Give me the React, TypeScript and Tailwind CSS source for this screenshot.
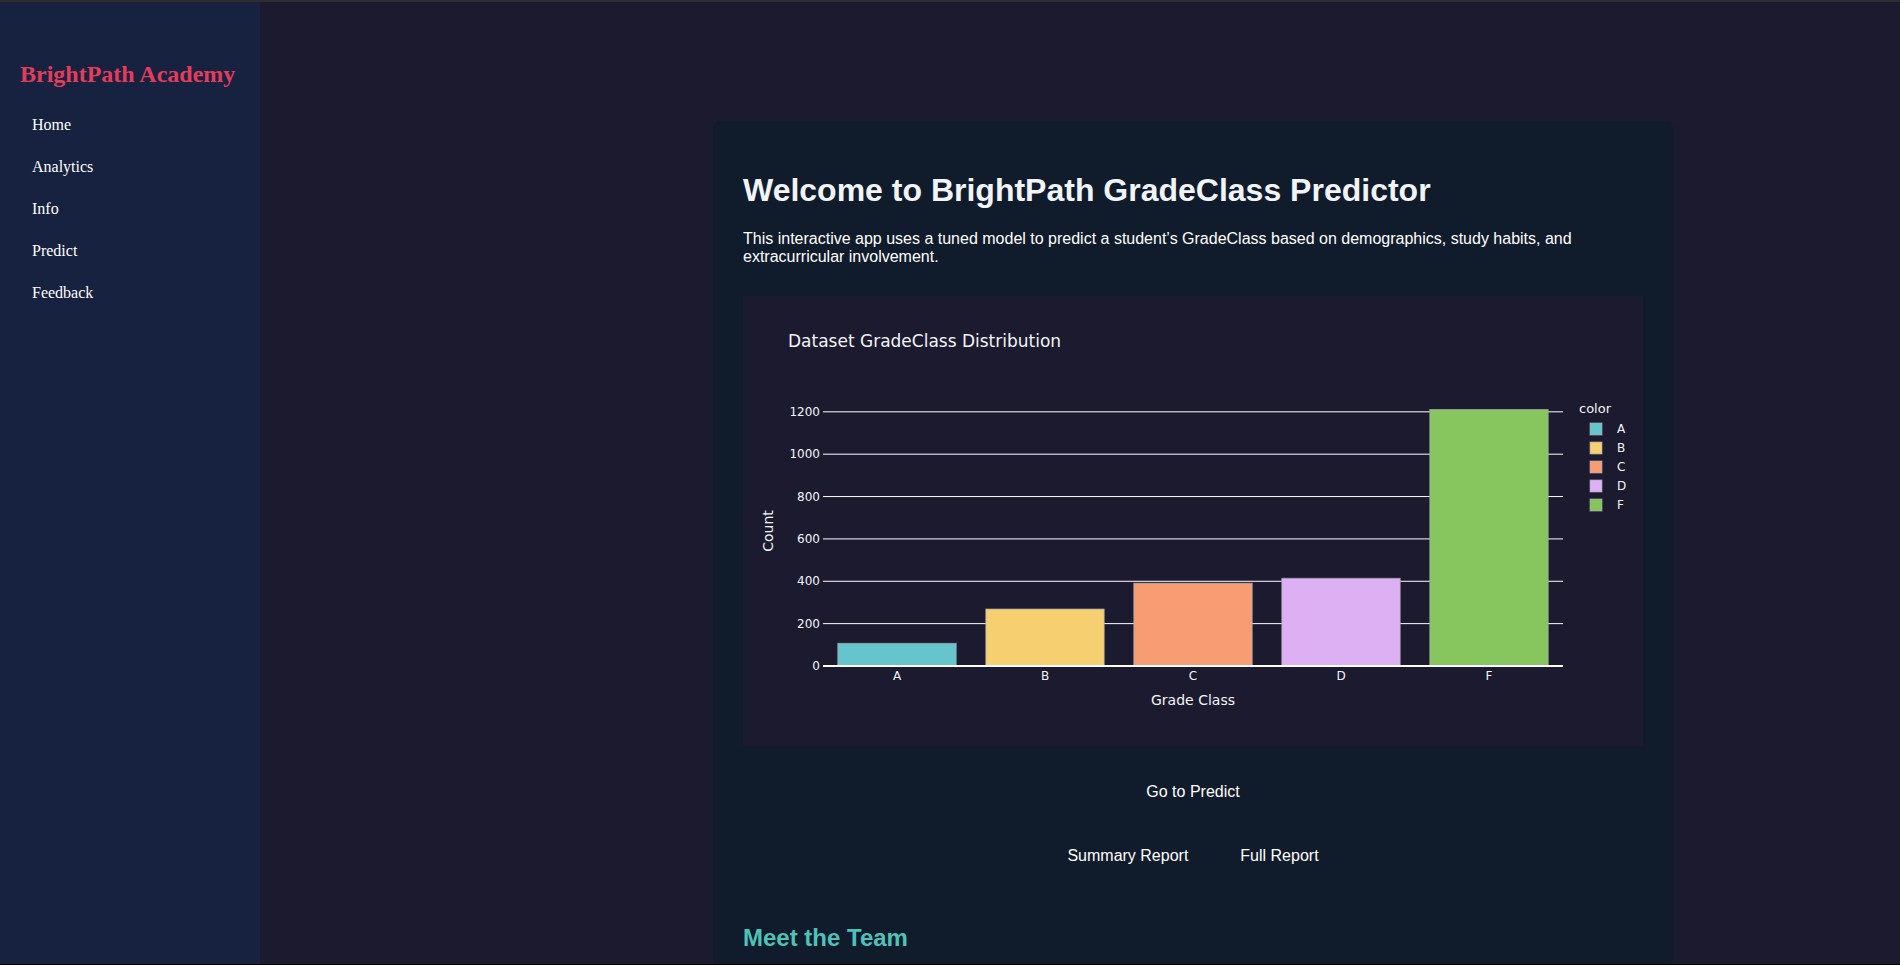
const grades = [
  { label: 'A', count: 107, color: '#66c5cc' },
  { label: 'B', count: 269, color: '#f6cf71' },
  { label: 'C', count: 391, color: '#f89c74' },
  { label: 'D', count: 414, color: '#dcb0f2' },
  { label: 'F', count: 1211, color: '#87c55f' },
]

const navItems = ['Home', 'Analytics', 'Info', 'Predict', 'Feedback']

const chartFont = "'DejaVu Sans', Verdana, sans-serif"

// plot area inside the 900x450 figure
const plotLeft = 80
const plotRight = 820
const plotTop = 100
const plotBottom = 370
const yMax = 1274.7
const yScale = (v: number) => plotBottom - (v / yMax) * (plotBottom - plotTop)

function GradeChart() {
  const slot = (plotRight - plotLeft) / grades.length
  const barWidth = slot * 0.8
  const ticks = [0, 200, 400, 600, 800, 1000, 1200]
  return (
    <svg width="900" height="450" viewBox="0 0 900 450" className="block">
      <text x="45" y="51" fill="#f2f5fa" fontSize="17" fontFamily={chartFont}>
        Dataset GradeClass Distribution
      </text>
      {ticks.map((t) => (
        <g key={t}>
          {t > 0 && (
            <line x1={plotLeft} x2={plotRight} y1={yScale(t)} y2={yScale(t)} stroke="#ffffff" strokeWidth="1" />
          )}
          <text x={plotLeft - 3} y={yScale(t) + 4} textAnchor="end" fill="#f2f5fa" fontSize="12" fontFamily={chartFont}>
            {t}
          </text>
        </g>
      ))}
      {grades.map((g, i) => {
        const x = plotLeft + slot * i + (slot - barWidth) / 2
        const y = yScale(g.count)
        return (
          <g key={g.label}>
            <rect
              x={x}
              y={y}
              width={barWidth}
              height={plotBottom - y}
              fill={g.color}
              stroke="rgba(170,170,180,0.7)"
              strokeWidth="1"
            />
            <text
              x={plotLeft + slot * i + slot / 2}
              y="384"
              textAnchor="middle"
              fill="#f2f5fa"
              fontSize="12"
              fontFamily={chartFont}
            >
              {g.label}
            </text>
          </g>
        )
      })}
      <line x1={plotLeft} x2={plotRight} y1={plotBottom} y2={plotBottom} stroke="#ffffff" strokeWidth="2" />
      <text x="450" y="409" textAnchor="middle" fill="#f2f5fa" fontSize="14" fontFamily={chartFont}>
        Grade Class
      </text>
      <text
        x="0"
        y="0"
        transform="translate(30 235) rotate(-90)"
        textAnchor="middle"
        fill="#f2f5fa"
        fontSize="14"
        fontFamily={chartFont}
      >
        Count
      </text>
      <text x="836" y="117" fill="#f2f5fa" fontSize="13" fontFamily={chartFont}>
        color
      </text>
      {grades.map((g, i) => (
        <g key={'legend' + g.label}>
          <rect
            x="847"
            y={127 + i * 19}
            width="12"
            height="12"
            fill={g.color}
            stroke="rgba(170,170,180,0.7)"
            strokeWidth="1"
          />
          <text x="874" y={137 + i * 19} fill="#f2f5fa" fontSize="12" fontFamily={chartFont}>
            {g.label}
          </text>
        </g>
      ))}
    </svg>
  )
}

export default function App() {
  return (
    <div className="flex h-[965px] overflow-hidden border-t-2 border-b border-t-[#2d2d2f] border-b-black bg-[#1b1a2e]">
      <aside className="w-[260px] shrink-0 bg-[#172140] px-5 pt-[60px] font-['Liberation_Serif',serif]">
        <div className="text-[24px] font-bold leading-[24px] text-[#e23d5a]">BrightPath Academy</div>
        <nav className="mt-[18px]">
          {navItems.map((item) => (
            <div key={item} className="h-[42px] pl-3 text-[16px] leading-[42px] text-white">
              {item}
            </div>
          ))}
        </nav>
      </aside>

      <main className="flex-1 overflow-hidden">
        <div className="ml-[453px] mt-[119px] w-[960px] rounded-lg bg-[#101b2c] px-[30px] pt-[30px] pb-10 font-['Liberation_Sans',Arial,sans-serif]">
          <h1 className="mt-[21px] text-[32px] font-bold leading-[37px] text-[#f1f5f9]">
            Welcome to BrightPath GradeClass Predictor
          </h1>
          <p className="mt-[21px] text-[16px] leading-[18px] text-white">
            This interactive app uses a tuned model to predict a student’s GradeClass based on demographics, study
            habits, and extracurricular involvement.
          </p>

          <div className="mt-[30px] h-[450px] w-[900px] bg-[#1b1a2e]">
            <GradeChart />
          </div>

          <div className="mt-[37px] flex justify-center">
            <button className="text-[16px] leading-[18px] text-white">Go to Predict</button>
          </div>

          <div className="mt-[46px] flex justify-center gap-[52px]">
            <button className="text-[16px] leading-[18px] text-white">Summary Report</button>
            <button className="text-[16px] leading-[18px] text-white">Full Report</button>
          </div>

          <h2 className="mt-[59px] text-[24px] font-bold leading-[28px] text-[#4fc2b8]">Meet the Team</h2>
        </div>
      </main>
    </div>
  )
}
